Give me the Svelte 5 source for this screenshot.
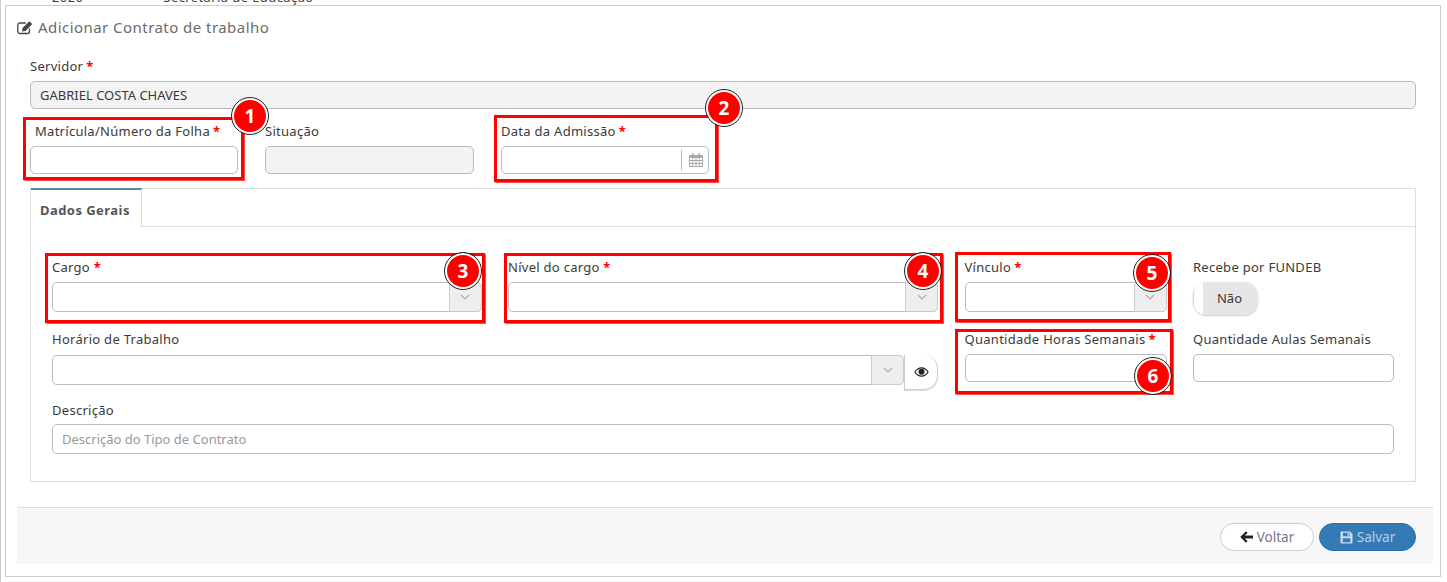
<script>
  const marks = [
    { n: 1, x: 23, y: 117, w: 221, h: 63, cx: 250, cy: 116 },
    { n: 2, x: 494, y: 115, w: 224, h: 67, cx: 724, cy: 108 },
    { n: 3, x: 45, y: 253, w: 440, h: 70, cx: 463, cy: 271 },
    { n: 4, x: 504, y: 253, w: 439, h: 70, cx: 923, cy: 271 },
    { n: 5, x: 955, y: 252, w: 216, h: 70, cx: 1152, cy: 273 },
    { n: 6, x: 955, y: 329, w: 218, h: 65, cx: 1153, cy: 376 }
  ];
</script>

<div class="page">
  <div class="prev">
    <span>2020</span>
    <span>Secretaria de Educação</span>
  </div>
  <section class="panel">
    <h3 class="title">
      <svg width="17" height="15" viewBox="0 0 17 15" aria-hidden="true">
        <path d="M12.500 8.500v3a2 2 0 0 1-2 2H2.800a2 2 0 0 1-2-2V5a2 2 0 0 1 2-2h6" fill="none" stroke="#444" stroke-width="1.300" />
        <path d="M5.500 8 12.300 1.200l3 2.900-6.800 6.800-3.400.5z" fill="#444" />
      </svg>
      Adicionar Contrato de trabalho
    </h3>

    <div class="form">
      <div class="field">
        <label for="srv">Servidor<b>*</b></label>
        <input id="srv" class="off" value="GABRIEL COSTA CHAVES" disabled />
      </div>

      <div class="row3">
        <div class="field">
          <label class="ind" for="mat">Matrícula/Número da Folha<b>*</b></label>
          <input id="mat" />
        </div>
        <div class="field">
          <label for="sit">Situação</label>
          <input id="sit" class="off" disabled />
        </div>
        <div class="field">
          <label for="adm">Data da Admissão<b>*</b></label>
          <div class="date">
            <input id="adm" />
            <span class="cal">
              <svg width="14" height="14" viewBox="0 0 14 14" aria-hidden="true">
                <path d="M0 2h14v12H0z" fill="#aaa" />
                <path d="M1 5h2.300v2H1zM4.200 5h2.300v2H4.200zM7.500 5h2.300v2H7.500zM10.700 5H13v2h-2.300zM1 8h2.300v2H1zM4.200 8h2.300v2H4.200zM7.500 8h2.300v2H7.500zM10.700 8H13v2h-2.300zM1 11h2.300v2H1zM4.200 11h2.300v2H4.200zM7.500 11h2.300v2H7.500zM10.700 11H13v2h-2.300z" fill="#fff" />
                <path d="M3 0h1.500v3H3zM9.500 0H11v3H9.500z" fill="#aaa" />
              </svg>
            </span>
          </div>
        </div>
      </div>

      <div class="tabs">
        <div class="tabbar"><span class="tab">Dados Gerais</span></div>
        <div class="tabbody">
          <div class="grid">
            <div class="cell">
              <label class="sp" for="cargo">Cargo <b>*</b></label>
              {@render select('cargo')}
            </div>
            <div class="cell">
              <label class="sp" for="nivel">Nível do cargo <b>*</b></label>
              {@render select('nivel')}
            </div>
            <div class="cell">
              <label for="vinc">Vínculo<b>*</b></label>
              {@render select('vinc')}
            </div>
            <div class="cell">
              <span class="lab">Recebe por FUNDEB</span>
              <div class="toggle"><span class="knob"></span><span class="off-txt">Não</span></div>
            </div>

            <div class="cell wide">
              <label class="hor" for="hor">Horário de Trabalho</label>
              <div class="with-eye">
                {@render select('hor')}
                <span class="eye">
                  <svg width="15" height="10" viewBox="0 0 15 10" aria-hidden="true">
                    <path d="M.3 5C2 2 4.500.3 7.500.3S13 2 14.700 5C13 8 10.500 9.700 7.500 9.700S2 8 .3 5z" fill="#222" />
                    <path d="M1.600 5C3 3 5 1.500 7.500 1.500S12 3 13.400 5C12 7 10 8.500 7.500 8.500S3 7 1.600 5z" fill="#fff" />
                    <circle cx="7.500" cy="4.800" r="3" fill="#222" />
                  </svg>
                </span>
              </div>
            </div>
            <div class="cell qty">
              <label for="qh">Quantidade Horas Semanais<b>*</b></label>
              <input id="qh" />
            </div>
            <div class="cell qty">
              <label for="qa">Quantidade Aulas Semanais</label>
              <input id="qa" />
            </div>

            <div class="cell full">
              <label for="desc">Descrição</label>
              <input id="desc" placeholder="Descrição do Tipo de Contrato" />
            </div>
          </div>
        </div>
      </div>
    </div>

    <footer class="foot">
      <button class="btn back">
        <svg width="13" height="12" viewBox="0 0 13 12" aria-hidden="true">
          <path d="M6 .3 7.600 1.900 4.700 4.500H13v3H4.700l2.900 2.600L6 11.700.2 6z" fill="#222" />
        </svg>
        Voltar
      </button>
      <button class="btn save">
        <svg width="13" height="13" viewBox="0 0 13 13" aria-hidden="true">
          <path fill-rule="evenodd" d="M1 .5h9L12.500 3v8.500a1 1 0 0 1-1 1h-10a1 1 0 0 1-1-1V1.500a1 1 0 0 1 .5-1zM3 1.700v3.600h6.500V1.700zM2.700 7.300v4h7.600v-4zM7.500 2.300h1.300v2.400H7.500z" fill="#c9dbec" />
        </svg>
        Salvar
      </button>
    </footer>
  </section>

  {#each marks as m}
    <div class="mark" style="left:{m.x}px;top:{m.y}px;width:{m.w}px;height:{m.h}px"></div>
  {/each}
  {#each marks as m}
    <div class="badge" style="left:{m.cx - 18}px;top:{m.cy - 18}px">{m.n}</div>
  {/each}
</div>

{#snippet select(id)}
  <div class="select">
    <input {id} />
    <span class="arrow">
      <svg width="10" height="6" viewBox="0 0 10 6" aria-hidden="true">
        <path d="M1 1l4 4 4-4" fill="none" stroke="#aaa" stroke-width="1.100" />
      </svg>
    </span>
  </div>
{/snippet}

<style>
  :global(body) {
    margin: 0;
    background: #fff;
    font-family: "Noto Sans", "Open Sans", sans-serif;
    font-size: 13px;
    color: #333;
    overflow: hidden;
  }
  .page {
    position: relative;
    width: 1447px;
    height: 582px;
    box-sizing: border-box;
    padding: 5px 6px 0 5px;
    overflow: hidden;
  }
  .page::before {
    content: "";
    position: absolute;
    left: 0;
    top: 0;
    bottom: 0;
    width: 1px;
    background: #ccc;
  }
  .prev {
    position: absolute;
    left: 52px;
    top: -10px;
    display: flex;
    gap: 80px;
    line-height: 14px;
    letter-spacing: 0.4px;
    color: #444;
  }
  .panel {
    height: 572px;
    box-sizing: border-box;
    border: 1px solid #ccc;
    display: flex;
    flex-direction: column;
  }
  .title {
    margin: 0;
    height: 50px;
    box-sizing: border-box;
    padding: 11px 0 19px 11px;
    font-size: 15px;
    font-weight: 400;
    line-height: 20px;
    color: #6b6b6b;
    letter-spacing: 0.45px;
    display: flex;
    align-items: center;
    align-self: flex-start;
    gap: 4px;
  }
  .form {
    padding: 0 24px;
    flex: 1;
  }
  label, .lab {
    display: block;
    height: 20px;
    line-height: 20px;
    margin-bottom: 5px;
    color: #3a3a3a;
    letter-spacing: 0.28px;
    white-space: nowrap;
  }
  label b {
    color: #f00;
    margin-left: 3px;
    font-weight: 700;
  }
  label.sp b { margin-left: 0; }
  label.ind { padding-left: 5px; }
  input {
    display: block;
    width: 100%;
    height: 28px;
    box-sizing: border-box;
    border: 1px solid #bbb;
    border-radius: 5px;
    background: #fff;
    padding: 0 9px;
    font: inherit;
    color: #444;
    outline: none;
  }
  input.off {
    background: #f3f3f3;
    opacity: 1;
    -webkit-text-fill-color: #3a3a3a;
  }
  input::placeholder { color: #999; opacity: 1; }
  .field { margin-bottom: 12px; }
  .row3 {
    display: grid;
    grid-template-columns: 208px 209px 208px;
    column-gap: 27px;
  }
  .row3 .field { margin-bottom: 14px; }
  .date { position: relative; }
  .cal {
    position: absolute;
    right: 0;
    top: 4px;
    height: 20px;
    width: 27px;
    border-left: 1px solid #bbb;
    display: flex;
    align-items: center;
    justify-content: center;
  }
  .tabs {
    border: 1px solid #ddd;
    height: 294px;
    box-sizing: border-box;
  }
  .tabbar {
    height: 39px;
    box-sizing: border-box;
    border-bottom: 1px solid #ddd;
  }
  .tab {
    display: block;
    width: 111px;
    height: 39px;
    box-sizing: border-box;
    margin: -1px 0 0 0;
    border-top: 2px solid #5a8a9e;
    border-right: 1px solid #ddd;
    background: #fff;
    padding: 10px 0 0 9px;
    font-weight: 700;
    color: #555;
    letter-spacing: 0.45px;
    line-height: 20px;
  }
  .tabbody { padding: 30px 21px 0; }
  .grid {
    display: grid;
    grid-template-columns: 429.5px 430px 202px 201px;
    column-gap: 26.5px;
    grid-template-rows: 72px 71px auto;
  }
  .cell label, .cell .lab { margin-bottom: 5px; }
  .cell input { height: 30px; }
  .cell.qty input { height: 28px; margin-top: 1px; }
  .cell label.hor { margin-bottom: 6px; }
  .wide { grid-column: span 2; }
  .full { grid-column: 1 / -1; }
  .full label { margin-bottom: 4px; }
  .select { position: relative; flex: 1; }
  .arrow {
    position: absolute;
    right: 0;
    top: 0;
    width: 33px;
    height: 30px;
    box-sizing: border-box;
    background: #eee;
    border: 1px solid #ccc;
    border-radius: 0 5px 5px 0;
    display: flex;
    align-items: center;
    justify-content: center;
  }
  .with-eye { display: flex; align-items: flex-start; }
  .eye {
    width: 34px;
    height: 35px;
    box-sizing: border-box;
    border: 1px solid #ccc;
    border-width: 0 1px 1px 1px;
    border-radius: 0 14px 14px 0;
    box-shadow: 0 1px 1px #ddd;
    display: flex;
    align-items: center;
    justify-content: center;
  }
  .toggle {
    display: flex;
    width: 65px;
    height: 33px;
    box-sizing: border-box;
    border-radius: 14px;
    background: #e6e6e6;
    box-shadow: 0 1px 2px #ccc;
    overflow: hidden;
  }
  .knob {
    width: 10px;
    background: #fff;
    border-radius: 14px 0 0 14px;
    box-shadow: inset 1px 0 1px #ccc;
  }
  .off-txt {
    flex: 1;
    text-align: center;
    line-height: 33px;
    color: #3a3a3a;
    margin-left: -2px;
  }
  .foot {
    margin: 25px 7px 12px 11px;
    height: 57px;
    box-sizing: border-box;
    border-top: 1px solid #ddd;
    background: #f7f7f7;
    display: flex;
    justify-content: flex-end;
    align-items: flex-start;
    gap: 5px;
    padding: 15px 17px 0 0;
  }
  .btn {
    height: 28px;
    border-radius: 14px;
    font: inherit;
    font-size: 13.500px;
    display: flex;
    align-items: center;
    justify-content: center;
    gap: 4px;
    padding: 0;
  }
  .back {
    width: 94px;
    background: #fff;
    border: 1px solid #ccc;
    color: #778;
  }
  .save {
    width: 97px;
    background: #337ab7;
    border: 1px solid #2e6da4;
    color: #b9cfe3;
  }
  .mark {
    position: absolute;
    box-sizing: border-box;
    border: 3px solid #f00;
    box-shadow: 0 0 1px 0.5px rgba(255, 0, 0, .7);
  }
  .badge {
    position: absolute;
    width: 36px;
    height: 36px;
    box-sizing: border-box;
    border-radius: 50%;
    background: #f00;
    border: 2px solid #fff;
    outline: 1px solid #222;
    color: #fff;
    font-weight: 700;
    font-size: 19px;
    line-height: 32px;
    text-align: center;
  }
</style>
